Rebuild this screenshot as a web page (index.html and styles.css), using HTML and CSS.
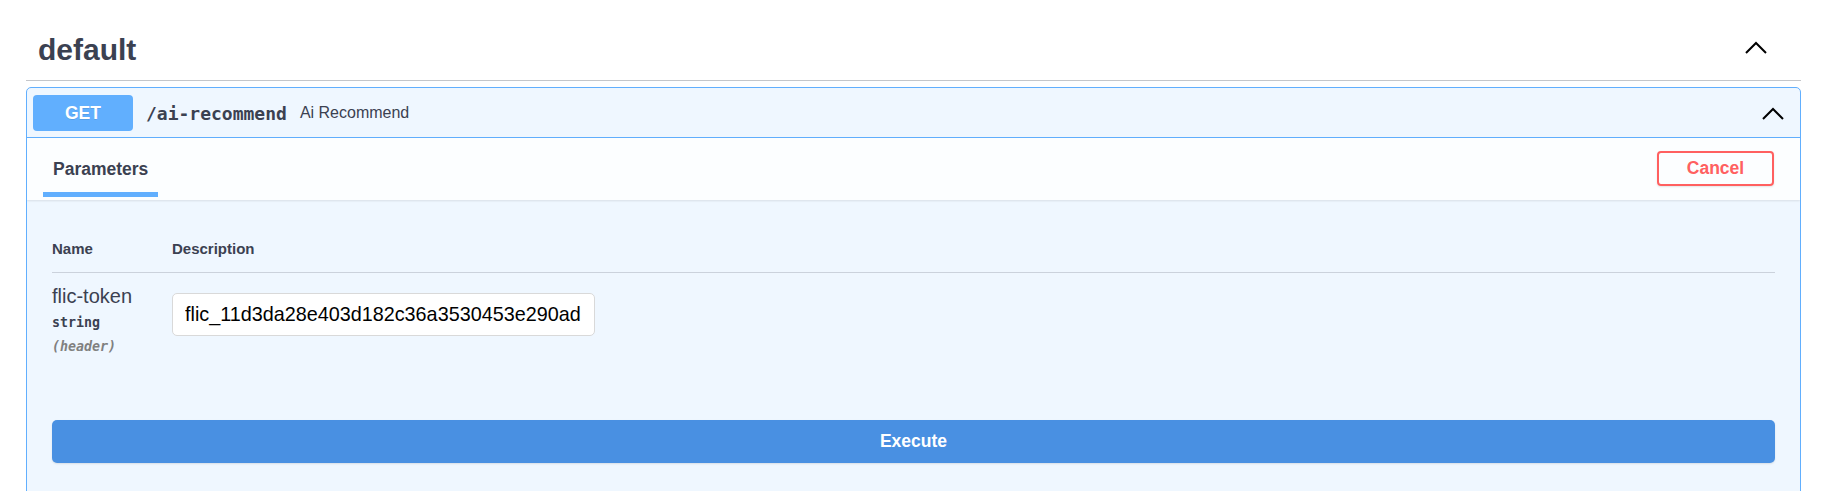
FILE: index.html
```html
<!DOCTYPE html>
<html>
<head>
<meta charset="utf-8">
<title>default</title>
<link rel="stylesheet" href="styles.css">
</head>
<body>
<div class="wrapper">
  <section class="tag-section">
    <h3 class="tag-header">
      <span class="tag-title">default</span>
      <svg class="chev chev-lg" width="22" height="13" viewBox="0 0 22 13"><polyline points="1,12 11,2 21,12" fill="none" stroke="#000" stroke-width="2"/></svg>
    </h3>
    <div class="opblock">
      <div class="summary">
        <span class="method">GET</span>
        <span class="path">/ai-recommend</span>
        <span class="desc">Ai Recommend</span>
        <svg class="chev chev-sm" width="22" height="13" viewBox="0 0 22 13"><polyline points="1,12 11,2 21,12" fill="none" stroke="#000" stroke-width="2"/></svg>
      </div>
      <div class="op-body">
        <div class="section-header">
          <div class="tab">Parameters</div>
          <button class="cancel" type="button">Cancel</button>
        </div>
        <div class="table-container">
          <div class="params">
            <div class="th">Name</div>
            <div class="th">Description</div>
            <div class="name-cell">
              <div class="param-name">flic-token</div>
              <div class="param-type">string</div>
              <div class="param-in">(header)</div>
            </div>
            <div class="desc-cell">
              <input class="param-input" type="text" value="flic_11d3da28e403d182c36a3530453e290ad">
            </div>
          </div>
        </div>
        <div class="execute-wrapper">
          <button class="execute" type="button">Execute</button>
        </div>
      </div>
    </div>
  </section>
</div>
</body>
</html>
```

FILE: styles.css
```css
* {
  box-sizing: border-box;
}

html, body {
  margin: 0;
  background: #ffffff;
  font-family: "Liberation Sans", Arial, sans-serif;
  color: #3b4151;
}

.wrapper {
  padding: 20px 27px 0 26px;
}

.tag-header {
  margin: 0 0 6px;
  padding: 12px 34px 12px 12px;
  display: flex;
  align-items: center;
  justify-content: space-between;
  border-bottom: 1px solid rgba(59, 65, 81, 0.3);
  font-size: 30px;
  line-height: 36px;
  font-weight: 700;
  color: #3b4151;
}

.chev {
  display: block;
  flex: none;
}

.chev-lg {
  margin-bottom: 6px;
}

.opblock {
  border: 1px solid #61affe;
  border-radius: 5px;
  background: #eff7ff;
  overflow: hidden;
}

.summary {
  display: flex;
  align-items: center;
  padding: 7px 16px 6px 6px;
  border-bottom: 1px solid #61affe;
}

.method {
  width: 100px;
  height: 36px;
  border-radius: 4px;
  background: #61affe;
  color: #ffffff;
  font-size: 17.5px;
  font-weight: 700;
  line-height: 36px;
  text-align: center;
  text-shadow: 0 1px 0 rgba(0, 0, 0, 0.1);
  flex: none;
}

.path {
  padding: 0 13px;
  font-family: "DejaVu Sans Mono", "Liberation Mono", monospace;
  font-size: 18px;
  font-weight: 700;
  color: #3b4151;
}

.desc {
  flex: 1;
  font-size: 16px;
  color: #3b4151;
}

.section-header {
  height: 62px;
  display: flex;
  justify-content: space-between;
  padding: 0 26px 3px 16px;
  background: rgba(255, 255, 255, 0.8);
  box-shadow: 0 1px 2px rgba(0, 0, 0, 0.1);
}

.tab {
  align-self: flex-end;
  padding: 0 10px 13px;
  border-bottom: 5px solid #61affe;
  font-size: 17.5px;
  line-height: 20px;
  font-weight: 700;
  color: #3b4151;
}

.cancel {
  align-self: flex-start;
  margin-top: 13px;
  width: 117px;
  height: 35px;
  padding: 0;
  border: 2px solid #ff6060;
  border-radius: 4px;
  background: transparent;
  color: #ff6060;
  font-family: "Liberation Sans", Arial, sans-serif;
  font-size: 17.5px;
  font-weight: 700;
  line-height: 31px;
  box-shadow: 0 1px 2px rgba(0, 0, 0, 0.1);
}

.table-container {
  padding: 25px 25px;
}

.params {
  display: grid;
  grid-template-columns: 120px 1fr;
}

.th {
  padding: 15px 0;
  font-size: 15px;
  line-height: 17px;
  font-weight: 700;
  color: #3b4151;
  border-bottom: 1px solid rgba(59, 65, 81, 0.2);
}

.name-cell {
  padding: 12px 0 11px;
}

.param-name {
  font-size: 20px;
  line-height: 23px;
  color: #3b4151;
}

.param-type {
  padding-top: 3px;
  font-family: "DejaVu Sans Mono", "Liberation Mono", monospace;
  font-size: 13.3px;
  line-height: 24px;
  font-weight: 700;
  color: #3b4151;
}

.param-in {
  font-family: "DejaVu Sans Mono", "Liberation Mono", monospace;
  font-size: 13.3px;
  line-height: 24px;
  font-weight: 700;
  font-style: italic;
  color: #808080;
}

.desc-cell {
  padding-top: 12px;
}

.param-input {
  display: block;
  margin-top: 8px;
  width: 423px;
  height: 43px;
  padding: 0 2px 0 12px;
  border: 1px solid #d9d9d9;
  border-radius: 5px;
  background: #ffffff;
  font-family: "Liberation Sans", Arial, sans-serif;
  font-size: 19.8px;
  color: #000000;
  outline: none;
}

.execute-wrapper {
  padding: 25px 25px 60px;
}

.execute {
  display: block;
  width: 100%;
  height: 43px;
  border: none;
  border-radius: 5px;
  background: #4990e2;
  color: #ffffff;
  font-family: "Liberation Sans", Arial, sans-serif;
  font-size: 17.5px;
  font-weight: 700;
  box-shadow: 0 1px 2px rgba(0, 0, 0, 0.1);
}
```
